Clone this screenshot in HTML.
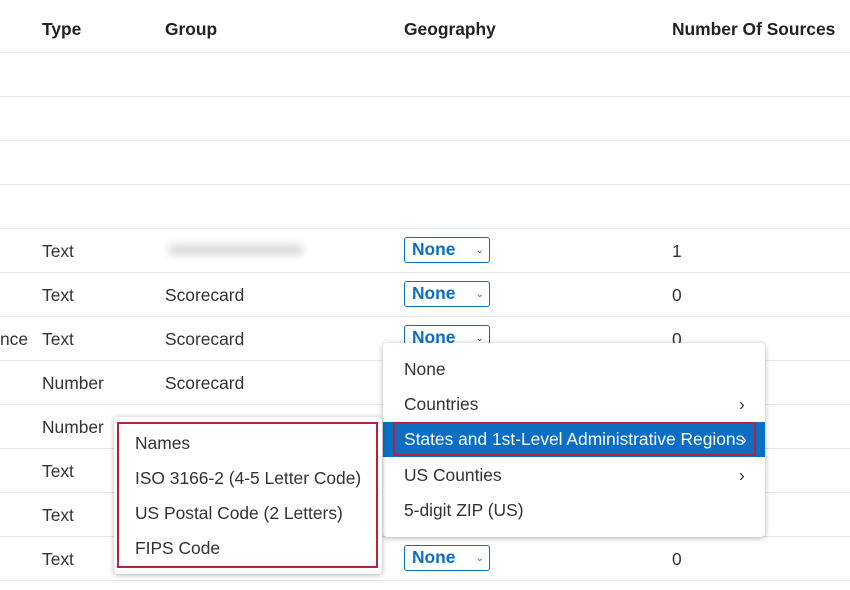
<!DOCTYPE html>
<html><head><style>
body{margin:0;width:850px;height:590px;overflow:hidden;background:#fff;font-family:"Liberation Sans",sans-serif;color:#333;font-size:17.4px;position:relative}
.t{position:absolute;white-space:nowrap;line-height:20px}
.h{font-weight:bold;color:#222}
.line{position:absolute;left:0;width:850px;height:1px;background:#e6e6e6}
.sel{position:absolute;left:404px;width:86px;height:26px;border:1px solid #0b6ec2;border-radius:3px;box-sizing:border-box;color:#0b6ec2;font-weight:bold;padding-left:7px;line-height:23px}
.sel:after{content:"⌄";position:absolute;right:5px;top:1px;font-size:10px;font-weight:normal}
.menu{position:absolute;background:#fff;border-radius:4px;box-shadow:0 1px 6px rgba(0,0,0,.3)}
</style></head><body>
<div class="t h" style="left:42px;top:19px">Type</div>
<div class="t h" style="left:165px;top:19px">Group</div>
<div class="t h" style="left:404px;top:19px">Geography</div>
<div class="t h" style="left:672px;top:19px">Number Of Sources</div>
<div class="line" style="top:52px"></div><div class="line" style="top:96px"></div><div class="line" style="top:140px"></div><div class="line" style="top:184px"></div><div class="line" style="top:228px"></div><div class="line" style="top:272px"></div><div class="line" style="top:316px"></div><div class="line" style="top:360px"></div><div class="line" style="top:404px"></div><div class="line" style="top:448px"></div><div class="line" style="top:492px"></div><div class="line" style="top:536px"></div><div class="line" style="top:580px"></div>
<div style="position:absolute;left:152px;top:229px;width:168px;height:42px;background:#fff"></div>
<div style="position:absolute;left:168px;top:244px;width:135px;height:12px;background:#ddd;filter:blur(4px);border-radius:6px"></div>
<div class="t" style="left:42px;top:241px">Text</div>
<div class="t" style="left:42px;top:285px">Text</div><div class="t" style="left:165px;top:285px">Scorecard</div>
<div class="t" style="left:0;top:329px">nce</div><div class="t" style="left:42px;top:329px">Text</div><div class="t" style="left:165px;top:329px">Scorecard</div>
<div class="t" style="left:42px;top:373px">Number</div><div class="t" style="left:165px;top:373px">Scorecard</div>
<div class="t" style="left:42px;top:417px">Number</div>
<div class="t" style="left:42px;top:461px">Text</div>
<div class="t" style="left:42px;top:505px">Text</div>
<div class="t" style="left:42px;top:549px">Text</div>
<div class="sel" style="top:237px">None</div>
<div class="sel" style="top:281px">None</div>
<div class="sel" style="top:325px">None</div>
<div class="sel" style="top:545px">None</div>
<div class="t" style="left:672px;top:241px">1</div>
<div class="t" style="left:672px;top:285px">0</div>
<div class="t" style="left:672px;top:329px">0</div>
<div class="t" style="left:672px;top:549px">0</div>
<div class="menu" style="left:383px;top:343px;width:382px;height:194px">
<div class="t" style="left:21px;top:16px">None</div>
<div class="t" style="left:21px;top:51px">Countries</div><div class="t" style="left:356px;top:51px">›</div>
<div style="position:absolute;left:0;top:79px;width:382px;height:35px;background:#0b6ec2"></div>
<div style="position:absolute;left:10px;top:79px;width:363px;height:34px;border:2px solid #b5233a;box-sizing:border-box"></div>
<div class="t" style="left:21px;top:86px;color:#fff">States and 1st-Level Administrative Regions</div><div class="t" style="left:358px;top:86px;color:#fff">›</div>
<div class="t" style="left:21px;top:122px">US Counties</div><div class="t" style="left:356px;top:122px">›</div>
<div class="t" style="left:21px;top:157px">5-digit ZIP (US)</div>
</div>
<div class="menu" style="left:114px;top:417px;width:268px;height:157px">
<div style="position:absolute;left:3px;top:5px;width:261px;height:146px;border:2px solid #b5233a;box-sizing:border-box"></div>
<div class="t" style="left:21px;top:16px">Names</div>
<div class="t" style="left:21px;top:51px">ISO 3166-2 (4-5 Letter Code)</div>
<div class="t" style="left:21px;top:86px">US Postal Code (2 Letters)</div>
<div class="t" style="left:21px;top:121px">FIPS Code</div>
</div>
</body></html>
